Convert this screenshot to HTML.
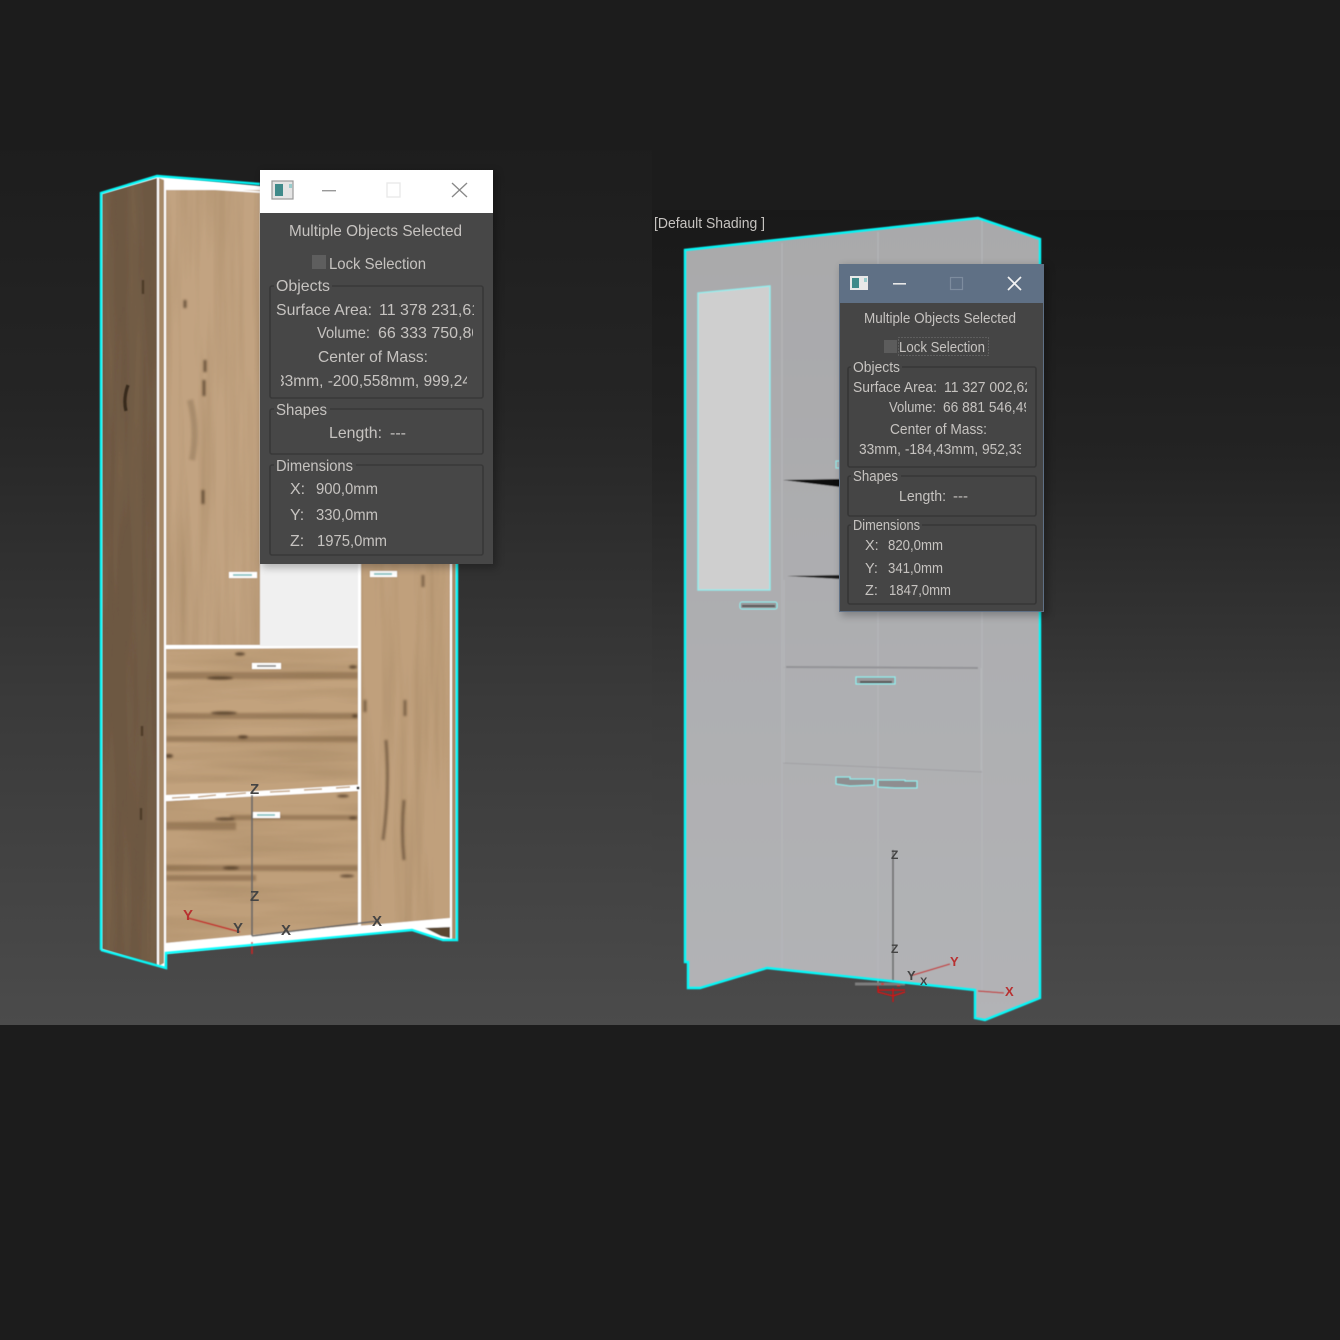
<!DOCTYPE html>
<html><head><meta charset="utf-8">
<style>
html,body{margin:0;padding:0;background:#1c1c1c;width:1340px;height:1340px;overflow:hidden}
svg{display:block}
text{font-family:"Liberation Sans",sans-serif;fill:#c6c3c0;white-space:pre;filter:blur(.3px)}
.l text{font-size:16px}
.r text{font-size:14.5px}
.ax{font-size:15px;font-weight:bold;fill:#444}
</style></head><body>
<svg width="1340" height="1340" viewBox="0 0 1340 1340" xmlns="http://www.w3.org/2000/svg">
<defs>
<linearGradient id="vp" x1="0" y1="140" x2="0" y2="1025" gradientUnits="userSpaceOnUse">
<stop offset="0" stop-color="#1d1d1d"/><stop offset=".3" stop-color="#252525"/><stop offset=".62" stop-color="#393939"/><stop offset="1" stop-color="#4b4b4b"/></linearGradient>
<linearGradient id="vp2" x1="0" y1="210" x2="0" y2="1025" gradientUnits="userSpaceOnUse">
<stop offset="0" stop-color="#191919"/><stop offset=".3" stop-color="#232323"/><stop offset=".6" stop-color="#393939"/><stop offset="1" stop-color="#4b4b4b"/></linearGradient>
<linearGradient id="grey" x1="0" y1="218" x2="0" y2="1020" gradientUnits="userSpaceOnUse">
<stop offset="0" stop-color="#a9a9ab"/><stop offset="1" stop-color="#b2b3b6"/></linearGradient>
<filter id="gv" x="0" y="0" width="100%" height="100%"><feTurbulence type="fractalNoise" baseFrequency="0.07 0.004" numOctaves="3" seed="4"/><feColorMatrix values="0 0 0 0 .3  0 0 0 0 .19  0 0 0 0 .09  1.5 0 0 0 -.58"/></filter>
<filter id="gh" x="0" y="0" width="100%" height="100%"><feTurbulence type="fractalNoise" baseFrequency="0.005 0.06" numOctaves="3" seed="9"/><feColorMatrix values="0 0 0 0 .3  0 0 0 0 .19  0 0 0 0 .09  1.5 0 0 0 -.6"/></filter>
<filter id="soft" x="-5%" y="-5%" width="110%" height="110%"><feGaussianBlur stdDeviation=".45"/></filter>
<filter id="knot" x="-30%" y="-100%" width="160%" height="300%"><feGaussianBlur stdDeviation="1"/></filter>
<filter id="sh" x="-10%" y="-10%" width="120%" height="120%"><feGaussianBlur stdDeviation="4"/></filter>
<clipPath id="c1"><rect x="270" y="295" width="204" height="30"/></clipPath>
<clipPath id="c2"><rect x="270" y="320" width="203" height="30"/></clipPath>
<clipPath id="c3"><rect x="281" y="368" width="186" height="26"/></clipPath>
<clipPath id="c4"><rect x="850" y="376" width="177" height="22"/></clipPath>
<clipPath id="c5"><rect x="850" y="398" width="176" height="20"/></clipPath>
<clipPath id="c6"><rect x="859" y="440" width="162" height="20"/></clipPath>
<clipPath id="side"><polygon points="102,194 157,178 157,966 102,949"/></clipPath>
<clipPath id="dr1"><polygon points="166,649 358,648 358,787 166,795"/></clipPath>
<clipPath id="dr2"><polygon points="166,801 358,791 358,925 166,943"/></clipPath>
</defs>

<rect width="1340" height="1340" fill="#1c1c1c"/>
<rect x="0" y="150" width="652" height="875" fill="url(#vp)"/>
<rect x="652" y="210" width="688" height="815" fill="url(#vp2)"/>

<!-- left cabinet -->
<g filter="url(#soft)">
<polygon points="101,193 157,176 260,186 457,186 457,940 443,940 412,930 166,953 165,968 101,950" fill="#fff"/>
<g clip-path="url(#side)">
<rect x="102" y="176" width="56" height="795" fill="#6d5843"/>
<rect x="102" y="176" width="56" height="795" filter="url(#gv)" opacity=".4"/>
<path d="M128 385q-5 14 -2 26" stroke="#2f2218" stroke-width="3.5" fill="none" opacity=".85"/>
<path d="M143 280v14M142 726v10M141 808v12" stroke="#3a2a1b" stroke-width="2.5" opacity=".6"/>
</g>
<polygon points="159,178 164,180 164,963 159,966" fill="#a78a68"/>
<rect x="166" y="190" width="94" height="455" fill="#c2a381"/>
<rect x="166" y="190" width="94" height="455" filter="url(#gv)" opacity=".5"/>
<g stroke="#4a3423" fill="none" opacity=".7" filter="url(#knot)">
<path d="M205 360v12M185 300v8M203 490v14M204 380v16" stroke-width="3"/>
<path d="M190 400q8 30 2 60" stroke-width="6" opacity=".3"/>
</g>
<path d="M165 186L260 192" stroke="#fff" stroke-width="1.8"/>
<path d="M165 182L260 187" stroke="#fff" stroke-width="1.8"/>
<rect x="260" y="560" width="98" height="86" fill="#f0f0f0"/>
<rect x="165" y="646" width="195" height="3" fill="#fff"/>
<g clip-path="url(#dr1)">
<rect x="166" y="648" width="192" height="148" fill="#c2a27d"/>
<rect x="166" y="648" width="192" height="148" filter="url(#gh)" opacity=".5"/>
<g fill="#6f5236" filter="url(#knot)" opacity=".45">
<rect x="166" y="672" width="192" height="7"/>
<rect x="166" y="713" width="192" height="6"/>
<rect x="166" y="736" width="192" height="6"/>
</g>
<g fill="#4a3423" filter="url(#knot)" opacity=".8">
<ellipse cx="220" cy="678" rx="13" ry="1.6"/><ellipse cx="224" cy="713" rx="13" ry="1.6"/><ellipse cx="243" cy="737" rx="5" ry="1.6"/><ellipse cx="169" cy="756" rx="4" ry="2"/><ellipse cx="353" cy="667" rx="4" ry="1.6"/><ellipse cx="240" cy="654" rx="5" ry="1.6"/><ellipse cx="355" cy="716" rx="3" ry="1.5"/>
</g>
</g>
<g clip-path="url(#dr2)">
<rect x="166" y="790" width="192" height="155" fill="#bf9f7a"/>
<rect x="166" y="790" width="192" height="155" filter="url(#gh)" opacity=".5"/>
<g fill="#6f5236" filter="url(#knot)" opacity=".45">
<rect x="166" y="822" width="70" height="8"/><rect x="166" y="865" width="192" height="6"/><rect x="166" y="875" width="90" height="6"/><rect x="230" y="815" width="128" height="5"/>
</g>
<g fill="#4a3423" filter="url(#knot)" opacity=".75">
<ellipse cx="225" cy="819" rx="10" ry="1.6"/><ellipse cx="231" cy="868" rx="8" ry="1.6"/><ellipse cx="347" cy="876" rx="7" ry="1.5"/><ellipse cx="343" cy="796" rx="6" ry="1.5"/><ellipse cx="353" cy="818" rx="4" ry="1.4"/>
</g>
</g>
<path d="M165 799L230 795L358 787" stroke="#fff" stroke-width="4.5"/>
<g stroke="#c6a889" stroke-width="1.4"><path d="M172 798L190 797M198 797L216 795M226 795L246 793M270 792L290 791M304 790L322 789M336 788L350 787"/></g>
<rect x="358" y="560" width="3" height="366" fill="#fff"/>
<polygon points="361,560 450,560 450,919 361,926" fill="#c0a07c"/>
<rect x="361" y="560" width="89" height="362" filter="url(#gv)" opacity=".5"/>
<g stroke="#4a3423" fill="none" opacity=".55" filter="url(#knot)">
<path d="M405 700v16M404 800q-3 30 0 60M365 700v12M386 740q4 50 -3 100M423 575v12" stroke-width="3"/>
</g>
<rect x="450" y="560" width="2" height="380" fill="#fff"/>
<rect x="452" y="560" width="4" height="380" fill="#a98a66"/>
<polygon points="165,948 450,921 450,926 165,954" fill="#fff"/>
<polygon points="165,944 358,926 450,918 450,922 165,949" fill="#fff"/>
<polygon points="425,928 450,927 450,938 441,936" fill="#5a4630"/>
<rect x="229" y="572" width="28" height="6" fill="#fff"/><rect x="233" y="574" width="19" height="2" fill="#8fc8c8"/>
<rect x="370" y="571" width="27" height="6" fill="#fff"/><rect x="374" y="573" width="18" height="2" fill="#8fc8c8"/>
<rect x="252" y="663" width="29" height="6" fill="#fff"/><rect x="257" y="665" width="19" height="2" fill="#999"/>
<rect x="253" y="812" width="27" height="6" fill="#fff"/><rect x="257" y="814" width="18" height="2" fill="#8fc8c8"/>
<path d="M252 795V936" stroke="#666" stroke-width="1.6"/>
<path d="M188 918L240 932" stroke="#c22c2c" stroke-width="1.6"/>
<path d="M252 936L378 921" stroke="#666" stroke-width="1.6"/>
<path d="M252 942V954" stroke="#d02020" stroke-width="1.5"/>
<circle cx="358" cy="788" r="1.5" fill="#222"/>
</g>
<path d="M101 950V193L157 176L260 184M457 560V940H443L412 930L166 953V968L101 950" fill="none" stroke="#0ff" stroke-width="2.4" filter="url(#soft)" opacity=".95"/>
<text class="ax" x="250" y="794">Z</text>
<text class="ax" x="250" y="901">Z</text>
<text class="ax" x="183" y="920" style="fill:#b83030">Y</text>
<text class="ax" x="233" y="933">Y</text>
<text class="ax" x="281" y="935">X</text>
<text class="ax" x="372" y="926">X</text>

<!-- right cabinet -->
<g filter="url(#soft)">
<polygon points="685,250 978,218 1040,239 1040,998 985,1020 975,1018 975,990 767,968 700,988 688,988 688,962 685,962" fill="url(#grey)"/>
<path d="M782 243V970M878 232V985M982 219V992" stroke="#b6b7ba" stroke-width="1"/>
<polygon points="698,293 770,286 770,590 698,590" fill="#cfcfcf" stroke="#8ff0f0" stroke-width="1.3"/>
<polygon points="783,480 840,479 840,487" fill="#0d0a0a"/>
<polygon points="787,576 840,575 840,579" fill="#1a1a1a"/>
<path d="M786 667L978 668" stroke="#939396" stroke-width="2"/>
<path d="M783 763L982 772" stroke="#a0a0a3" stroke-width="1"/>
<path d="M784 668V763M981 668V770M784 580V667" stroke="#b6b7ba" stroke-width="1"/>
<rect x="740" y="602" width="37" height="7" rx="2" fill="#9a9a9c" stroke="#8ff0f0" stroke-width="1.1"/>
<rect x="742" y="605" width="33" height="2" fill="#555"/>
<rect x="856" y="677" width="39" height="7" fill="#9a9a9c" stroke="#8ff0f0" stroke-width="1.1"/>
<rect x="860" y="681" width="32" height="2" fill="#555"/>
<polygon points="836,777 850,777 850,779 874,779 874,785 850,786 836,784" fill="#8e8e90" stroke="#8ff0f0" stroke-width="1.1"/>
<polygon points="878,780 905,780 905,781 917,781 917,788 895,788 878,787" fill="#8e8e90" stroke="#8ff0f0" stroke-width="1.1"/>
<path d="M893 850V982" stroke="#666" stroke-width="1.5"/>
<path d="M910 976L950 964" stroke="#c23030" stroke-width="1.3"/>
<path d="M978 991L1004 993" stroke="#c23030" stroke-width="1.3"/>
<path d="M855 984H905" stroke="#7d7d7d" stroke-width="3"/>
<path d="M878 990H905M878 986V992L893 996L905 992M893 988V1002M881 984h3M897 986h3" stroke="#e01010" stroke-width="1.2" fill="none"/>
<rect x="836" y="461" width="4" height="7" fill="none" stroke="#8ff0f0"/>
</g>
<path d="M685 250L978 218L1040 239V998L985 1020L975 1018V990L767 968L700 988H688V962H685Z" fill="none" stroke="#0ff" stroke-width="2.4" filter="url(#soft)" opacity=".95"/>
<text class="ax" x="891" y="859" style="font-size:12px">Z</text>
<text class="ax" x="891" y="953" style="font-size:12px">Z</text>
<text class="ax" x="907" y="980" style="font-size:13px">Y</text>
<text class="ax" x="920" y="985" style="font-size:11px">X</text>
<text class="ax" x="950" y="966" style="font-size:13px;fill:#b83030">Y</text>
<text class="ax" x="1005" y="996" style="font-size:13px;fill:#b83030">X</text>

<text x="654" y="228" font-size="14.5" textLength="111" lengthAdjust="spacingAndGlyphs">[Default Shading ]</text>

<!-- left dialog -->
<rect x="262" y="172" width="235" height="396" fill="#000" opacity=".25" filter="url(#sh)"/>
<g class="l">
<rect x="260" y="170" width="233" height="394" fill="#474747"/>
<rect x="260" y="170" width="233" height="43" fill="#fff"/>
<rect x="272" y="181" width="21" height="18" fill="#e4e4e4" stroke="#9a9a9a" stroke-width="1.2"/>
<rect x="275" y="184" width="8" height="12" fill="#3f8a8a"/>
<rect x="289" y="184" width="3" height="4" fill="#9cc"/>
<rect x="322" y="190" width="14" height="1.4" fill="#999"/>
<rect x="387" y="183" width="13" height="14" fill="none" stroke="#e8e8e8" stroke-width="1.3"/>
<path d="M452 183L467 197M467 183L452 197" stroke="#888" stroke-width="1.3"/>
<g fill="none" stroke="#383838" stroke-width="1.6">
<rect x="270" y="286" width="213" height="112" rx="2"/>
<rect x="270" y="409" width="213" height="45" rx="2"/>
<rect x="270" y="465" width="213" height="90" rx="2"/>
</g>
<rect x="274" y="280" width="58" height="12" fill="#474747"/>
<rect x="274" y="403" width="56" height="12" fill="#474747"/>
<rect x="274" y="459" width="82" height="12" fill="#474747"/>
<rect x="312" y="255" width="14" height="14" fill="#5e5e5e"/>
<text x="289" y="236" textLength="173" lengthAdjust="spacingAndGlyphs">Multiple Objects Selected</text>
<text x="329" y="269" textLength="97" lengthAdjust="spacingAndGlyphs">Lock Selection</text>
<text x="276" y="291" textLength="54" lengthAdjust="spacingAndGlyphs">Objects</text>
<text x="276" y="315" textLength="96" lengthAdjust="spacingAndGlyphs">Surface Area:</text>
<text x="379" y="315" clip-path="url(#c1)">11 378 231,61</text>
<text x="317" y="338" textLength="53" lengthAdjust="spacingAndGlyphs">Volume:</text>
<text x="378" y="338" clip-path="url(#c2)">66 333 750,80</text>
<text x="318" y="362" textLength="110" lengthAdjust="spacingAndGlyphs">Center of Mass:</text>
<text x="276" y="386" clip-path="url(#c3)" textLength="195" lengthAdjust="spacingAndGlyphs">33mm, -200,558mm, 999,24</text>
<text x="276" y="415" textLength="51" lengthAdjust="spacingAndGlyphs">Shapes</text>
<text x="329" y="438" textLength="53" lengthAdjust="spacingAndGlyphs">Length:</text>
<text x="390" y="438" textLength="16" lengthAdjust="spacingAndGlyphs">---</text>
<text x="276" y="471" textLength="77" lengthAdjust="spacingAndGlyphs">Dimensions</text>
<text x="290" y="494">X:</text><text x="316" y="494" textLength="62" lengthAdjust="spacingAndGlyphs">900,0mm</text>
<text x="290" y="520">Y:</text><text x="316" y="520" textLength="62" lengthAdjust="spacingAndGlyphs">330,0mm</text>
<text x="290" y="546">Z:</text><text x="317" y="546" textLength="70" lengthAdjust="spacingAndGlyphs">1975,0mm</text>
</g>

<!-- right dialog -->
<rect x="841" y="266" width="207" height="350" fill="#000" opacity=".25" filter="url(#sh)"/>
<g class="r">
<rect x="839" y="264" width="205" height="348" fill="#5f7085"/>
<rect x="840" y="303" width="203" height="308" fill="#454545"/>
<rect x="850" y="276" width="18" height="14" fill="#e8e8e8"/>
<rect x="852" y="278" width="7" height="10" fill="#3f8a8a"/>
<rect x="864" y="278" width="3" height="4" fill="#9cc"/>
<rect x="893" y="283" width="13" height="1.6" fill="#e8e8e8"/>
<rect x="950.5" y="277.5" width="12" height="12" fill="none" stroke="#7d8c9e" stroke-width="1.2"/>
<path d="M1008 277L1021 290M1021 277L1008 290" stroke="#f2f2f2" stroke-width="1.7"/>
<g fill="none" stroke="#363636" stroke-width="1.6">
<rect x="848" y="367" width="188" height="100" rx="2"/>
<rect x="848" y="476" width="188" height="40" rx="2"/>
<rect x="848" y="525" width="188" height="79" rx="2"/>
</g>
<rect x="851" y="361" width="51" height="12" fill="#454545"/>
<rect x="851" y="470" width="50" height="12" fill="#454545"/>
<rect x="851" y="519" width="71" height="12" fill="#454545"/>
<rect x="884" y="340" width="13" height="13" fill="#5c5c5c"/>
<rect x="898.5" y="337.5" width="90" height="18" fill="none" stroke="#777" stroke-dasharray="1 2"/>
<text x="864" y="323" textLength="152" lengthAdjust="spacingAndGlyphs">Multiple Objects Selected</text>
<text x="899" y="352" textLength="86" lengthAdjust="spacingAndGlyphs">Lock Selection</text>
<text x="853" y="372" textLength="47" lengthAdjust="spacingAndGlyphs">Objects</text>
<text x="853" y="392" textLength="84" lengthAdjust="spacingAndGlyphs">Surface Area:</text>
<text x="944" y="392" clip-path="url(#c4)" textLength="88" lengthAdjust="spacingAndGlyphs">11 327 002,62</text>
<text x="889" y="412" textLength="47" lengthAdjust="spacingAndGlyphs">Volume:</text>
<text x="943" y="412" clip-path="url(#c5)" textLength="88" lengthAdjust="spacingAndGlyphs">66 881 546,49</text>
<text x="890" y="434" textLength="97" lengthAdjust="spacingAndGlyphs">Center of Mass:</text>
<text x="859" y="454" clip-path="url(#c6)" textLength="165" lengthAdjust="spacingAndGlyphs">33mm, -184,43mm, 952,33</text>
<text x="853" y="481" textLength="45" lengthAdjust="spacingAndGlyphs">Shapes</text>
<text x="899" y="501" textLength="47" lengthAdjust="spacingAndGlyphs">Length:</text>
<text x="953" y="501" textLength="15" lengthAdjust="spacingAndGlyphs">---</text>
<text x="853" y="530" textLength="67" lengthAdjust="spacingAndGlyphs">Dimensions</text>
<text x="865" y="550">X:</text><text x="888" y="550" textLength="55" lengthAdjust="spacingAndGlyphs">820,0mm</text>
<text x="865" y="573">Y:</text><text x="888" y="573" textLength="55" lengthAdjust="spacingAndGlyphs">341,0mm</text>
<text x="865" y="595">Z:</text><text x="889" y="595" textLength="62" lengthAdjust="spacingAndGlyphs">1847,0mm</text>
</g>
</svg>
</body></html>
